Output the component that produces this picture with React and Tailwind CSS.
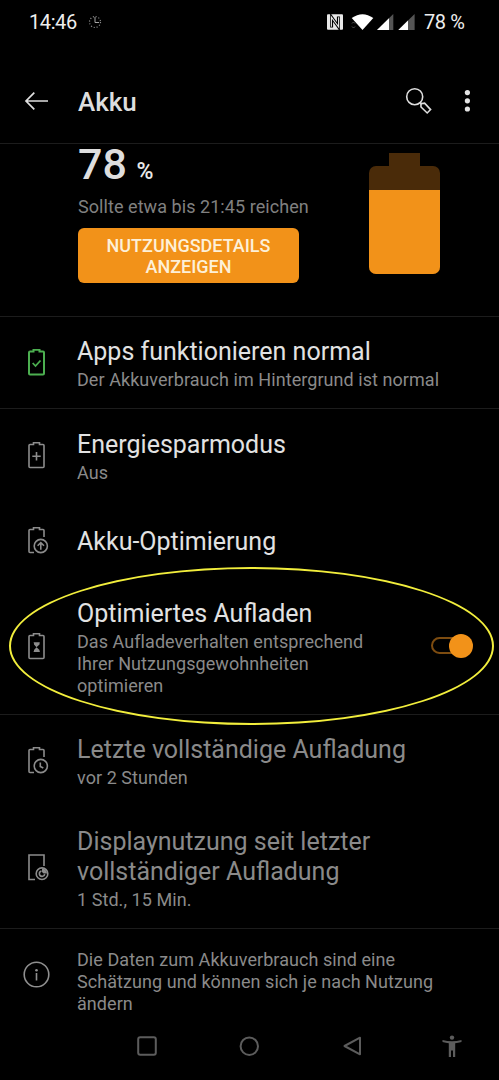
import clsx from "clsx";

const BATTERY = "M5 2.5H2Q1 2.5 1 3.5V24.5Q1 25.5 2 25.5H15Q16 25.5 16 24.5V3.5Q16 2.5 15 2.5H11.5V.8H5.5V2.5Z";
const BATTERY_OPEN = "M6 25.5H2Q1 25.5 1 24.5V3.5Q1 2.5 2 2.5H5.5V.8H11.5V2.5H15Q16 2.5 16 3.5V10";

function Icon({ className, children }) {
	return (
		<svg
			width="22"
			height="27"
			viewBox="0 0 22 27"
			fill="none"
			stroke="currentColor"
			strokeWidth="1.6"
			className={clsx("ml-7 shrink-0", className)}
		>
			{children}
		</svg>
	);
}

function Item({ icon, title, text, className, dimmed, wide, children }) {
	return (
		<div className={clsx("flex items-center", className)}>
			<div className="w-[77px] shrink-0 text-[#8c8c8c]">{icon}</div>
			<div className={clsx("shrink-0 pt-[3px]", wide ? "w-[400px]" : "w-[310px]")}>
				<div
					className={clsx(
						"text-[25px] leading-[30px]",
						dimmed ? "text-[#8a8a8a]" : "text-[#e2e2e2]",
					)}
				>
					{title}
				</div>
				{text && (
					<div className="mt-[2px] text-[18px] leading-[21.8px] tracking-[0.06px] text-[#8a8a8a]">
						{text}
					</div>
				)}
			</div>
			{children}
		</div>
	);
}

function StatusBar() {
	return (
		<div className="flex h-11 items-center pl-[29px] leading-none text-[#eeeeee]">
			<span className="w-[59px] text-[20px] tracking-[-0.4px]">14:46</span>
			<svg width="14" height="14" viewBox="0 0 14 14" fill="none" stroke="#8a8a8a">
				<circle cx="7" cy="7" r="5.5" strokeWidth="1.2" strokeDasharray="1.1 1.78" />
				<path d="M7 2V7.5H11" stroke="#a5a5a5" />
			</svg>
			<svg width="90" height="18" viewBox="0 0 90 18" className="ml-[224px]">
				<rect x="1" y="1.3" width="16" height="15.4" rx="1" fill="#e8e8e8" />
				<path d="M5.6 14.6V4.2L12.4 13.8V3.4" fill="none" stroke="#000" strokeWidth="3" />
				<path d="M5.4 13.8V4.2L12.6 13.8V4.2" fill="none" stroke="#e8e8e8" strokeWidth="1.1" />
				<path d="M25.7 5Q36.5-2.6 47.3 5L36.5 17Z" fill="#fff" />
				<path d="M26 10.5L27.5 9L29 10.5M26 13.5L27.5 15L29 13.5" fill="none" stroke="#555" />
				<path d="M51 17L67.3 1V17Z" fill="#555" />
				<path d="M51 17L63 5.2V17Z" fill="#fff" />
				<path d="M72.3 17L88.6 1V17Z" fill="#555" />
				<path d="M72.3 17L82 7.5V17Z" fill="#fff" />
			</svg>
			<span className="ml-2 text-[20px] tracking-[-0.4px]">78 %</span>
		</div>
	);
}

function Toolbar() {
	return (
		<div className="flex h-[100px] items-center border-b border-[#1c1c1c] pt-[15px]">
			<svg
				width="25"
				height="20"
				viewBox="0 0 25 20"
				fill="none"
				stroke="#e0e0e0"
				strokeWidth="1.7"
				className="ml-6"
			>
				<path d="M24 10H2.2M10.3 1.7L2 10L10.3 18.3" />
			</svg>
			<h1 className="ml-[29px] w-[326px] pt-[2px] text-[26px] leading-[30px] font-medium text-[#dedede]">Akku</h1>
			<svg width="28" height="28" viewBox="0 0 28 28" fill="none" stroke="#dedede" strokeWidth="1.6">
				<circle cx="10.7" cy="9.7" r="8" />
				<path d="M16.3 15.5L18 17.3" />
				<path d="M17 20L16.9 16.6L20.6 16.2L26.6 22.6L23.2 26Z" />
			</svg>
			<svg width="6" height="24" viewBox="0 0 6 24" fill="#e4e4e4" className="ml-8">
				<circle cx="3.4" cy="3.6" r="2.6" />
				<circle cx="3.4" cy="11.8" r="2.6" />
				<circle cx="3.4" cy="20" r="2.6" />
			</svg>
		</div>
	);
}

function Summary() {
	return (
		<div className="flex h-[173px] border-b border-[#1c1c1c] pl-[78px]">
			<div className="w-[291px]">
				<div className="h-[41px] text-[43px] leading-[41px] font-medium text-[#dedede]">
					78 <span className="-ml-[1px] text-[23px] text-[#e8e8e8]">%</span>
				</div>
				<div className="mt-[11px] text-[18px] leading-[22px] tracking-[0.06px] text-[#808080]">
					Sollte etwa bis 21:45 reichen
				</div>
				<button
					type="button"
					className="mt-[10px] block h-[55px] w-[221px] rounded-[6px] bg-[#f29219] px-5 text-[18px] leading-[21px] font-medium text-[#fdf0d8]"
				>
					NUTZUNGSDETAILS ANZEIGEN
				</button>
			</div>
			<div className="flex w-[71px] flex-col items-center pt-[9px]">
				<div className="h-[13px] w-[31px] bg-[#4a2b09]" />
				<div className="h-[108px] w-full overflow-hidden rounded-[7px] bg-[#4a2b09] pt-[24px]">
					<div className="h-full bg-[#f29219]" />
				</div>
			</div>
		</div>
	);
}

function NavBar() {
	return (
		<div className="flex h-[66px] items-start pt-[21px] text-[#5c5c5c]">
			<svg width="20" height="20" viewBox="0 0 20 20" fill="none" stroke="currentColor" strokeWidth="2" className="ml-[137px]">
				<rect x="1.2" y="1.2" width="17.6" height="17.6" rx="2" />
			</svg>
			<svg width="20" height="20" viewBox="0 0 20 20" fill="none" stroke="currentColor" strokeWidth="2" className="ml-[82px]">
				<circle cx="10.3" cy="10.2" r="8.7" />
			</svg>
			<svg width="20" height="20" viewBox="0 0 20 20" fill="none" stroke="currentColor" strokeWidth="2" strokeLinejoin="round" className="ml-[83px]">
				<path d="M18 1.7V18.3L2.5 10Z" />
			</svg>
			<svg width="20" height="23" viewBox="0 0 20 23" fill="currentColor" className="-mt-[1px] ml-20">
				<circle cx="10" cy="2.6" r="2.2" />
				<path d="M.5 5.1Q10 7.6 19.5 5.1V7.1Q16 8 13.2 8.2V22H11V15.5H9V22H6.8V8.2Q4 8 .5 7.1Z" />
			</svg>
		</div>
	);
}

export default function App() {
	return (
		<div className="relative h-[1080px] w-[499px] overflow-hidden bg-black font-['Roboto',sans-serif]">
			<StatusBar />
			<Toolbar />
			<Summary />

			<div className="border-b border-[#1c1c1c]">
				<Item
					wide
					className="h-[91px]"
					title="Apps funktionieren normal"
					text="Der Akkuverbrauch im Hintergrund ist normal"
					icon={
						<Icon className="text-[#4caf50]">
							<path d={BATTERY} strokeWidth="2" />
							<path d="M4.7 14L7.5 17L12.5 11.5" strokeWidth="1.8" />
						</Icon>
					}
				/>
			</div>

			<div className="border-b border-[#1c1c1c]">
				<Item
					className="h-[92px]"
					title="Energiesparmodus"
					text="Aus"
					icon={
						<Icon>
							<path d={BATTERY} />
							<path d="M8.5 10V18.4M4.3 14.2H12.7" />
						</Icon>
					}
				/>
				<Item
					className="h-[78px]"
					title="Akku-Optimierung"
					icon={
						<Icon>
							<path d={BATTERY_OPEN} />
							<circle cx="12.8" cy="19" r="6.6" />
							<path d="M12.8 22.8V15.8M9.6 18.7L12.8 15.6L16 18.7" />
						</Icon>
					}
				/>
				<Item
					className="h-[135px]"
					title="Optimiertes Aufladen"
					text="Das Aufladeverhalten entsprechend Ihrer Nutzungsgewohnheiten optimieren"
					icon={
						<Icon>
							<path d={BATTERY} />
							<path d="M6 9.9H11.5V11.5L8.5 14.2L6 11.5ZM6 18.5H11.5V17L8.5 14.2L6 17Z" fill="currentColor" stroke="none" />
							<path d="M5.7 9.8H11.7M5.7 18.5H11.7" strokeWidth="1.1" />
						</Icon>
					}
				>
					<button type="button" role="switch" aria-checked="true" className="mb-[2px] ml-11 flex items-center">
						<span className="h-[17px] w-[30px] rounded-full border-2 border-[#7d4c10]" />
						<span className="-ml-3 size-6 rounded-full bg-[#f29219]" />
					</button>
				</Item>
			</div>

			<div className="border-b border-[#1c1c1c]">
				<Item
					dimmed
					wide
					className="h-[91px]"
					title="Letzte vollständige Aufladung"
					text="vor 2 Stunden"
					icon={
						<Icon>
							<path d={BATTERY_OPEN} />
							<circle cx="12.8" cy="19" r="6.6" />
							<path d="M12.3 15.5V19.5L15.3 21" />
						</Icon>
					}
				/>
				<Item
					dimmed
					className="h-[122px]"
					title="Displaynutzung seit letzter vollständiger Aufladung"
					text="1 Std., 15 Min."
					icon={
						<Icon>
							<path d="M7 25.5H1V1H16V12" />
							<circle cx="14" cy="19.7" r="5.8" />
							<path d="M13.5 17A2.7 2.7 0 1 0 16.7 20.2" />
							<path d="M14 14.5A5 5 0 0 1 19 19.5H15.5L14 18Z" fill="currentColor" stroke="none" />
						</Icon>
					}
				/>
			</div>

			<div className="flex h-[86px] items-center pt-5">
				<div className="w-[77px] shrink-0">
					<svg width="27" height="27" viewBox="0 0 27 27" fill="none" stroke="#8f8f8f" strokeWidth="1.6" className="-mt-4 ml-[23px]">
						<circle cx="13.5" cy="13.5" r="12.3" />
						<path d="M13.5 12V19.5" />
						<circle cx="13.5" cy="9.2" r="1.3" fill="#8f8f8f" stroke="none" />
					</svg>
				</div>
				<p className="w-[370px] text-[18px] leading-[21.8px] tracking-[0.06px] text-[#8a8a8a]">
					Die Daten zum Akkuverbrauch sind eine Schätzung und können sich je nach Nutzung ändern
				</p>
			</div>

			<NavBar />

			<div className="pointer-events-none absolute top-[567px] left-[9px] h-[158px] w-[485px] rounded-[50%] border-2 border-[#f2ee3c]" />
		</div>
	);
}
